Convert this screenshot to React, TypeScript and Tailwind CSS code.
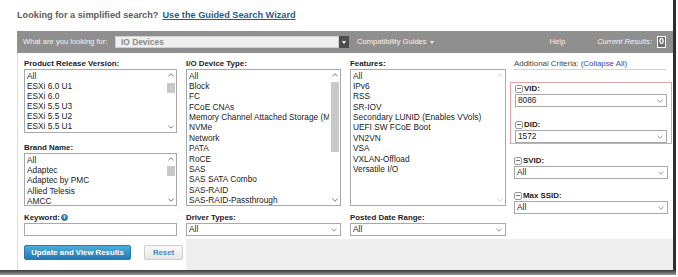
import React from "react";

const Chevron = ({ className = "" }: { className?: string }) => (
  <svg width="6" height="4" viewBox="0 0 6 4" className={className}>
    <path d="M0.5 0.8 L3 3.2 L5.5 0.8" fill="none" stroke="currentColor" strokeWidth="0.8" />
  </svg>
);
const ChevronUp = ({ className = "" }: { className?: string }) => (
  <svg width="6" height="4" viewBox="0 0 6 4" className={className}>
    <path d="M0.5 3.2 L3 0.8 L5.5 3.2" fill="none" stroke="currentColor" strokeWidth="0.8" />
  </svg>
);

function ListBox({
  items,
  h,
  rowH = "h-[10.4px] leading-[10.4px]",
  thumbTop,
  thumbH,
  disabled,
}: {
  items: string[];
  h: string;
  rowH?: string;
  thumbTop?: number;
  thumbH?: number;
  disabled?: boolean;
}) {
  return (
    <div className={`relative border border-[#a9a9a9] bg-white overflow-hidden ${h}`}>
      <div className="pl-[2px] pr-[11px] pt-[0.5px]">
        {items.map((it) => (
          <div key={it} className={`${rowH} text-[8.3px] text-[#222] whitespace-nowrap overflow-hidden`}>
            {it}
          </div>
        ))}
      </div>
      <div className={`absolute right-0 top-0 bottom-0 w-[10px] bg-white flex flex-col items-center justify-between py-[3px] ${disabled ? "text-[#c8c8c8]" : "text-[#555]"}`}>
        <ChevronUp />
        <Chevron />
      </div>
      {thumbTop !== undefined && (
        <div className="absolute right-[1px] w-[8px] bg-[#c9c9c9]" style={{ top: thumbTop, height: thumbH }} />
      )}
    </div>
  );
}

function Select({ value }: { value: string }) {
  return (
    <div className="h-[13px] border border-[#a9a9a9] bg-white flex items-center justify-between pl-[2px] pr-[3px] text-[8.3px] text-[#222]">
      <span>{value}</span>
      <Chevron className="text-[#777]" />
    </div>
  );
}

const Label = ({ children }: { children: React.ReactNode }) => (
  <div className="h-[9px] leading-[9px] text-[7.9px] font-bold text-[#222] mb-[1px] whitespace-nowrap">{children}</div>
);

const Minus = () => (
  <span className="inline-flex w-[8px] h-[8px] border border-[#999] rounded-[2px] items-center justify-center mr-[1px]">
    <span className="w-[4px] h-px bg-[#777]" />
  </span>
);

function Crit({ name, value }: { name: string; value: string }) {
  return (
    <div>
      <div className="h-[9px] flex items-center text-[7.9px] font-bold text-[#222] mb-[1px] whitespace-nowrap">
        <Minus />
        {name}
      </div>
      <Select value={value} />
    </div>
  );
}

const Caret = ({ color }: { color: string }) => (
  <span
    className={`w-0 h-0 border-l-[2.5px] border-r-[2.5px] border-t-[3px] border-l-transparent border-r-transparent ${color}`}
  />
);

export default function App() {
  return (
    <div className="w-[678px] h-[277px] bg-white font-['Liberation_Sans',Arial,sans-serif] overflow-hidden">
      <div className="w-[676px] h-[270px] border-r-[3px] border-r-[#2e2e2e] pl-[17px] flex flex-col">
        <div className="h-[31px] flex items-center pt-[1px] text-[9.2px] font-bold text-[#606060] whitespace-nowrap">
          <span>Looking for a simplified search?</span>
          <span className="ml-[4px] text-[#1c5f91] underline">Use the Guided Search Wizard</span>
        </div>
        <div className="h-[22px] bg-[#8f8f8f] flex items-center text-[7.6px] text-[#f4f4f4] whitespace-nowrap">
          <span className="ml-[6px] w-[92px]">What are you looking for:</span>
          <div className="w-[224px] h-[12px] bg-[#efefef] border border-[#d0d0d0] flex items-center pl-[5px] text-[8.4px] font-bold text-[#8a8a8a]">
            IO Devices
          </div>
          <div className="w-[10px] h-[12px] bg-[#4d4d4d] flex items-center justify-center">
            <Caret color="border-t-white" />
          </div>
          <span className="ml-[8px]">Compatibility Guides</span>
          <span className="ml-[3px]">
            <Caret color="border-t-[#eee] block" />
          </span>
          <span className="flex-1" />
          <span className="mr-[32px]">Help</span>
          <span className="italic mr-[5px]">Current Results:</span>
          <span className="w-[9px] h-[12px] border border-white bg-[#6d6d6d] flex items-center justify-center font-bold text-white text-[9px] mr-[7px]">
            0
          </span>
        </div>
        <div className="flex-1 border-l border-l-[#dcdcdc] flex flex-col">
          <div className="flex pl-[6px] pt-[6px] gap-[9px]">
            <div className="w-[153px] flex flex-col">
              <Label>Product Release Version:</Label>
              <ListBox
                h="h-[64px]"
                rowH="h-[10.2px] leading-[10.2px]"
                items={["All", "ESXi 6.0 U1", "ESXi 6.0", "ESXi 5.5 U3", "ESXi 5.5 U2", "ESXi 5.5 U1"]}
                thumbTop={13}
                thumbH={10}
              />
              <div className="mt-[10px]">
                <Label>Brand Name:</Label>
              </div>
              <ListBox
                h="h-[53px]"
                items={["All", "Adaptec", "Adaptec by PMC", "Allied Telesis", "AMCC"]}
                thumbTop={12}
                thumbH={10}
              />
              <div className="mt-[7px] h-[9px] flex items-center text-[7.9px] font-bold text-[#222] mb-[1px]">
                Keyword:
                <span className="ml-[1px] w-[7px] h-[7px] rounded-full bg-gradient-to-b from-[#6fb2e8] to-[#1e5fa8] border border-[#1c5a9c] flex items-center justify-center text-[5px] text-white leading-none">
                  i
                </span>
              </div>
              <div className="h-[13px] border border-[#a9a9a9] bg-white" />
            </div>
            <div className="w-[155px] flex flex-col">
              <Label>I/O Device Type:</Label>
              <ListBox
                h="h-[137px]"
                items={[
                  "All",
                  "Block",
                  "FC",
                  "FCoE CNAs",
                  "Memory Channel Attached Storage (MCAS)",
                  "NVMe",
                  "Network",
                  "PATA",
                  "RoCE",
                  "SAS",
                  "SAS SATA Combo",
                  "SAS-RAID",
                  "SAS-RAID-Passthrough",
                ]}
                thumbTop={12}
                thumbH={70}
              />
              <div className="mt-[7px]">
                <Label>Driver Types:</Label>
              </div>
              <Select value="All" />
            </div>
            <div className="w-[156px] flex flex-col">
              <Label>Features:</Label>
              <ListBox
                h="h-[137px]"
                disabled
                items={[
                  "All",
                  "IPv6",
                  "RSS",
                  "SR-IOV",
                  "Secondary LUNID (Enables VVols)",
                  "UEFI SW FCoE Boot",
                  "VN2VN",
                  "VSA",
                  "VXLAN-Offload",
                  "Versatile I/O",
                ]}
              />
              <div className="mt-[7px]">
                <Label>Posted Date Range:</Label>
              </div>
              <Select value="All" />
            </div>
            <div className="w-[162px] flex flex-col -ml-[5px]">
              <div className="ml-[4px] mr-[6px] h-[11px] border-b border-b-[#d4d4d4] text-[7.9px] text-[#444] leading-[9px] whitespace-nowrap">
                Additional Criteria: <span className="text-[#3a46b0]">(Collapse All)</span>
              </div>
              <div className="mt-[12px] border border-[#e2a4a4] px-[4px] pt-[1px] pb-0 flex flex-col gap-[13px]">
                <Crit name="VID:" value="8086" />
                <Crit name="DID:" value="1572" />
              </div>
              <div className="px-[4px] pt-[12px] flex flex-col gap-[12px]">
                <Crit name="SVID:" value="All" />
                <Crit name="Max SSID:" value="All" />
              </div>
            </div>
          </div>
          <div className="mt-auto h-[31px] flex">
            <div className="w-[168px] flex items-start pt-[6px] pl-[6px] gap-[13px]">
              <div className="w-[107px] h-[15px] rounded-[2px] border border-[#2a78ae] bg-gradient-to-b from-[#4cadde] to-[#2479b3] flex items-center justify-center text-[7.8px] font-bold text-white whitespace-nowrap">
                Update and View Results
              </div>
              <div className="w-[39px] h-[15px] rounded-[2px] border border-[#cfcfcf] bg-gradient-to-b from-[#fafafa] to-[#e6e6e6] flex items-center justify-center text-[7.8px] font-bold text-[#4a86c0]">
                Reset
              </div>
            </div>
            <div className="flex-1 bg-[#efefef]" />
          </div>
        </div>
      </div>
      <div className="w-[676px] h-[5px] bg-gradient-to-b from-[#3a3a3a] to-[#9a9a9a]" />
    </div>
  );
}
